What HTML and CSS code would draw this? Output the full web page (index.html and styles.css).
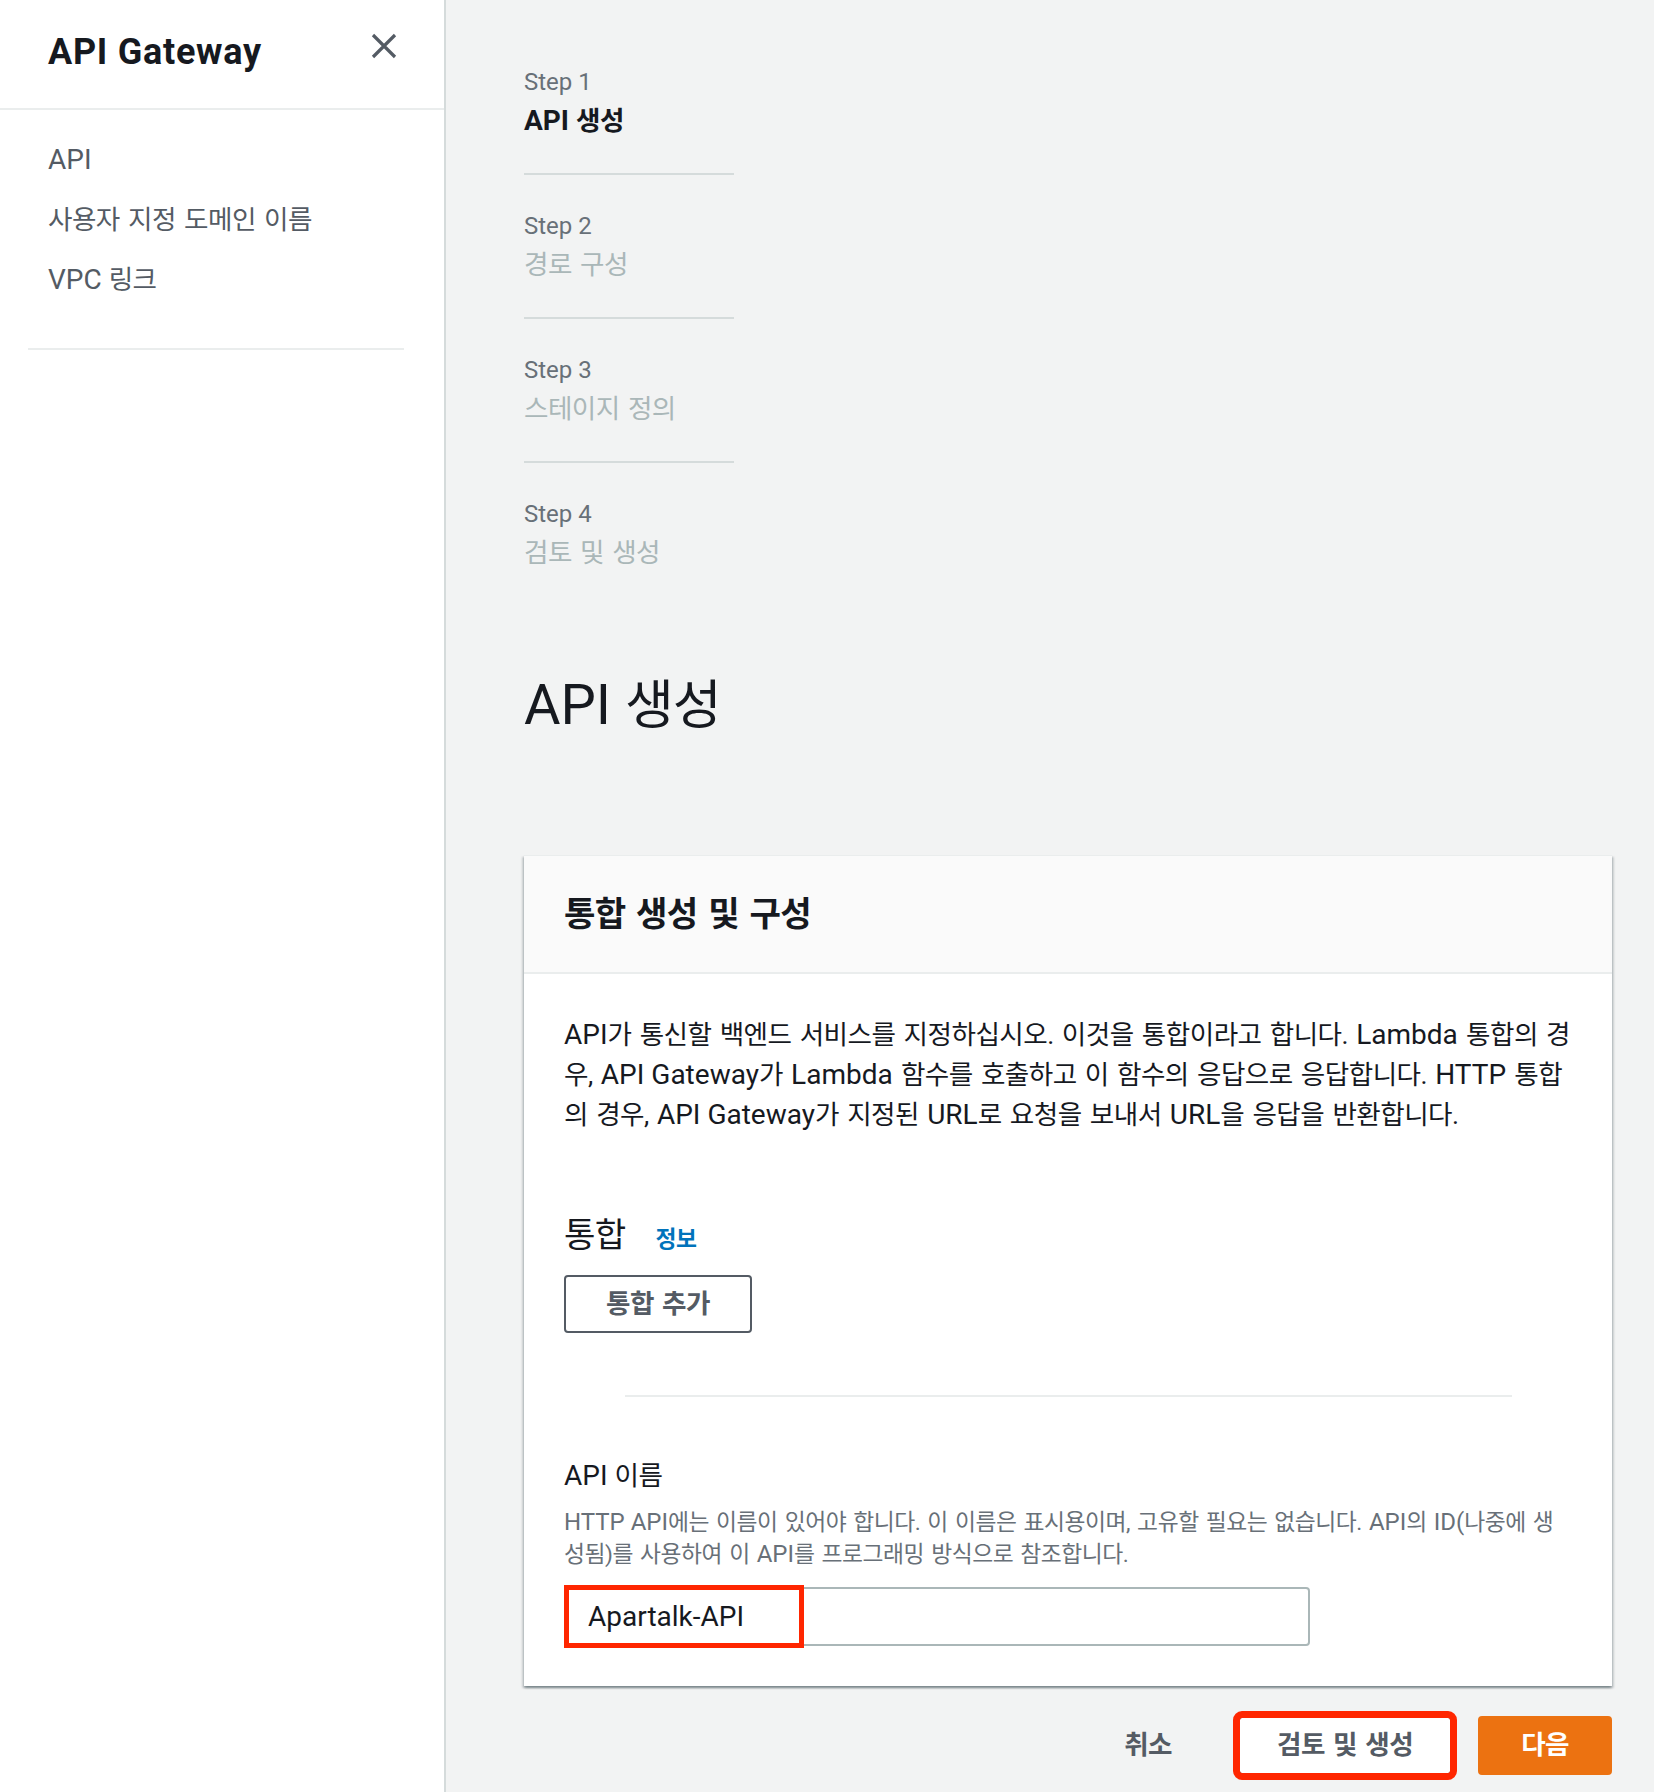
FILE: index.html
```html
<!DOCTYPE html>
<html lang="ko">
<head>
<meta charset="utf-8">
<title>API Gateway - API 생성</title>
<link rel="stylesheet" href="styles.css">
</head>
<body>
<div class="app">
  <aside class="sidebar">
    <div class="side-head">
      <h2 class="side-title">API Gateway</h2>
      <button class="close" aria-label="닫기">
        <svg width="26" height="26" viewBox="0 0 26 26"><path d="M2 2 L24 24 M24 2 L2 24" stroke="#545b64" stroke-width="3.2" fill="none"/></svg>
      </button>
    </div>
    <ul class="side-nav">
      <li>API</li>
      <li><span class="ko">사용자 지정 도메인 이름</span></li>
      <li>VPC <span class="ko">링크</span></li>
    </ul>
    <hr class="side-divider">
  </aside>

  <main class="main">
    <ol class="steps">
      <li class="step active">
        <div class="step-label">Step 1</div>
        <div class="step-title">API <span class="ko">생성</span></div>
      </li>
      <li class="step">
        <div class="step-label">Step 2</div>
        <div class="step-title"><span class="ko">경로 구성</span></div>
      </li>
      <li class="step">
        <div class="step-label">Step 3</div>
        <div class="step-title"><span class="ko">스테이지 정의</span></div>
      </li>
      <li class="step">
        <div class="step-label">Step 4</div>
        <div class="step-title"><span class="ko">검토 및 생성</span></div>
      </li>
    </ol>

    <h1 class="page-title">API <span class="ko">생성</span></h1>

    <section class="card">
      <div class="card-head">
        <h2 class="card-title"><span class="ko">통합 생성 및 구성</span></h2>
      </div>
      <div class="card-body">
        <p class="desc">API<span class="ko">가 통신할 백엔드 서비스를 지정하십시오. 이것을 통합이라고 합니다. </span>Lambda<span class="ko"> 통합의 경</span><br><span class="ko">우, </span>API Gateway<span class="ko">가 </span>Lambda<span class="ko"> 함수를 호출하고 이 함수의 응답으로 응답합니다. </span>HTTP<span class="ko"> 통합</span><br><span class="ko">의 경우, </span>API Gateway<span class="ko">가 지정된 </span>URL<span class="ko">로 요청을 보내서 </span>URL<span class="ko">을 응답을 반환합니다.</span></p>

        <div class="integ-head">
          <h3 class="integ-title"><span class="ko">통합</span></h3>
          <a class="info" href="#"><span class="ko">정보</span></a>
        </div>
        <div class="integ-actions">
          <button class="btn btn-outline"><span class="ko">통합 추가</span></button>
        </div>

        <div class="divider"></div>

        <label class="field-label" for="api-name">API <span class="ko">이름</span></label>
        <p class="help">HTTP API<span class="ko">에는 이름이 있어야 합니다. 이 이름은 표시용이며, 고유할 필요는 없습니다. </span>API<span class="ko">의 </span>ID(<span class="ko">나중에 생</span><br><span class="ko">성됨)를 사용하여 이 </span>API<span class="ko">를 프로그래밍 방식으로 참조합니다.</span></p>
        <div class="input-wrap">
          <input id="api-name" class="text-input" type="text" value="Apartalk-API">
          <span class="mark"></span>
        </div>
      </div>
    </section>

    <div class="actions">
      <button class="btn btn-link"><span class="ko">취소</span></button>
      <button class="btn btn-secondary marked"><span class="ko">검토 및 생성</span></button>
      <button class="btn btn-primary"><span class="ko">다음</span></button>
    </div>
  </main>
</div>
</body>
</html>
```

FILE: styles.css
```css
* {
  box-sizing: border-box;
}

html,
body {
  margin: 0;
  padding: 0;
}

body {
  font-family: Roboto, "Noto Sans CJK KR", sans-serif;
  color: #16191f;
  background: #f2f3f3;
  width: 1654px;
  height: 1792px;
  overflow: hidden;
}

.ko {
  font-size: 0.95em;
  letter-spacing: -0.02em;
  word-spacing: 0.08em;
  line-height: 1;
}

.app {
  display: flex;
  height: 1792px;
}

/* ---------- sidebar ---------- */
.sidebar {
  width: 446px;
  flex: none;
  background: #ffffff;
  border-right: 2px solid #d5dbdb;
}

.side-head {
  height: 110px;
  border-bottom: 2px solid #eaeded;
  display: flex;
  justify-content: space-between;
  align-items: flex-start;
  padding: 30px 47px 0 48px;
}

.side-title {
  margin: 0;
  font-size: 36px;
  line-height: 44px;
  font-weight: 700;
  letter-spacing: 0.02em;
  color: #16191f;
}

.close {
  margin-top: 3px;
  width: 26px;
  height: 26px;
  padding: 0;
  border: 0;
  background: none;
  display: block;
}

.close svg {
  display: block;
}

.side-nav {
  list-style: none;
  margin: 20px 0 0;
  padding: 0 0 0 48px;
  font-size: 28px;
  line-height: 60px;
  color: #545b64;
}

.side-divider {
  margin: 38px 0 0 28px;
  width: 376px;
  height: 2px;
  border: 0;
  background: #eaeded;
}

/* ---------- main ---------- */
.main {
  flex: 1;
  padding: 31px 42px 0 78px;
}

.steps {
  list-style: none;
  margin: 0;
  padding: 0;
  width: 210px;
}

.step {
  padding: 32px 0;
  border-bottom: 2px solid #d5dbdb;
}

.step:last-child {
  border-bottom: 0;
}

.step-label {
  font-size: 24px;
  line-height: 38px;
  color: #687078;
}

.step-title {
  font-size: 28px;
  line-height: 40px;
  color: #aab7b8;
}

.step.active .step-title {
  color: #16191f;
  font-weight: 700;
}

.page-title {
  margin: 68px 0 0;
  font-size: 56px;
  line-height: 64px;
  font-weight: 400;
  color: #16191f;
}

/* ---------- card ---------- */
.card {
  margin-top: 118px;
  background: #ffffff;
  border-top: 1px solid #eaeded;
  box-shadow: 0 2px 2px rgba(0, 28, 36, 0.3), 2px 2px 2px rgba(0, 28, 36, 0.15), -2px 2px 2px rgba(0, 28, 36, 0.15);
}

.card-head {
  height: 118px;
  background: #fafafa;
  border-bottom: 2px solid #eaeded;
  display: flex;
  align-items: center;
  padding: 0 40px;
}

.card-title {
  margin: 0;
  font-size: 36px;
  line-height: 44px;
  font-weight: 700;
}

.card-body {
  padding: 41px 40px 40px;
}

.desc {
  margin: 0;
  font-size: 28px;
  line-height: 40px;
  white-space: nowrap;
  color: #16191f;
}

.integ-head {
  margin-top: 78px;
  display: flex;
  align-items: baseline;
  gap: 30px;
}

.integ-title {
  margin: 0;
  font-size: 36px;
  line-height: 44px;
  font-weight: 400;
}

.info {
  font-size: 24px;
  font-weight: 700;
  color: #0073bb;
  text-decoration: none;
}

.integ-actions {
  margin-top: 18px;
  display: flex;
}

.btn {
  height: 58px;
  padding: 0 40px;
  border: 2px solid transparent;
  border-radius: 4px;
  font-family: inherit;
  font-size: 28px;
  font-weight: 700;
  line-height: 1;
  background: transparent;
  color: #545b64;
  display: flex;
  align-items: center;
  justify-content: center;
}

.btn-outline {
  background: #ffffff;
  border-color: #545b64;
}

.divider {
  margin: 62px 60px 0 61px;
  height: 2px;
  background: #eaeded;
}

.field-label {
  display: block;
  margin-top: 59px;
  font-size: 28px;
  line-height: 40px;
  color: #16191f;
}

.help {
  margin: 10px 0 0;
  font-size: 24px;
  line-height: 32px;
  color: #687078;
  white-space: nowrap;
}

.input-wrap {
  position: relative;
  margin-top: 17px;
  width: 746px;
}

.text-input {
  display: block;
  width: 100%;
  height: 59px;
  border: 2px solid #aab7b8;
  border-radius: 4px;
  padding: 0 22px;
  font-family: Roboto, "Noto Sans CJK KR", sans-serif;
  font-size: 28px;
  color: #16191f;
  background: #ffffff;
}

.mark {
  position: absolute;
  left: 0;
  top: -2px;
  width: 240px;
  height: 63px;
  border: 5px solid #ff2600;
  pointer-events: none;
}

/* ---------- footer actions ---------- */
.actions {
  margin-top: 30px;
  display: flex;
  justify-content: flex-end;
  gap: 26px;
}

.actions .btn {
  height: 59px;
}

.btn-link {
  background: transparent;
  padding: 0 38px;
}

.btn-secondary {
  background: #ffffff;
  border-color: #545b64;
  padding: 0 37px;
}

.marked {
  outline: 7px solid #ff2600;
  outline-offset: -2px;
}

.btn-primary {
  background: #ec7211;
  border-color: #ec7211;
  color: #ffffff;
  padding: 0 41px;
}
```
